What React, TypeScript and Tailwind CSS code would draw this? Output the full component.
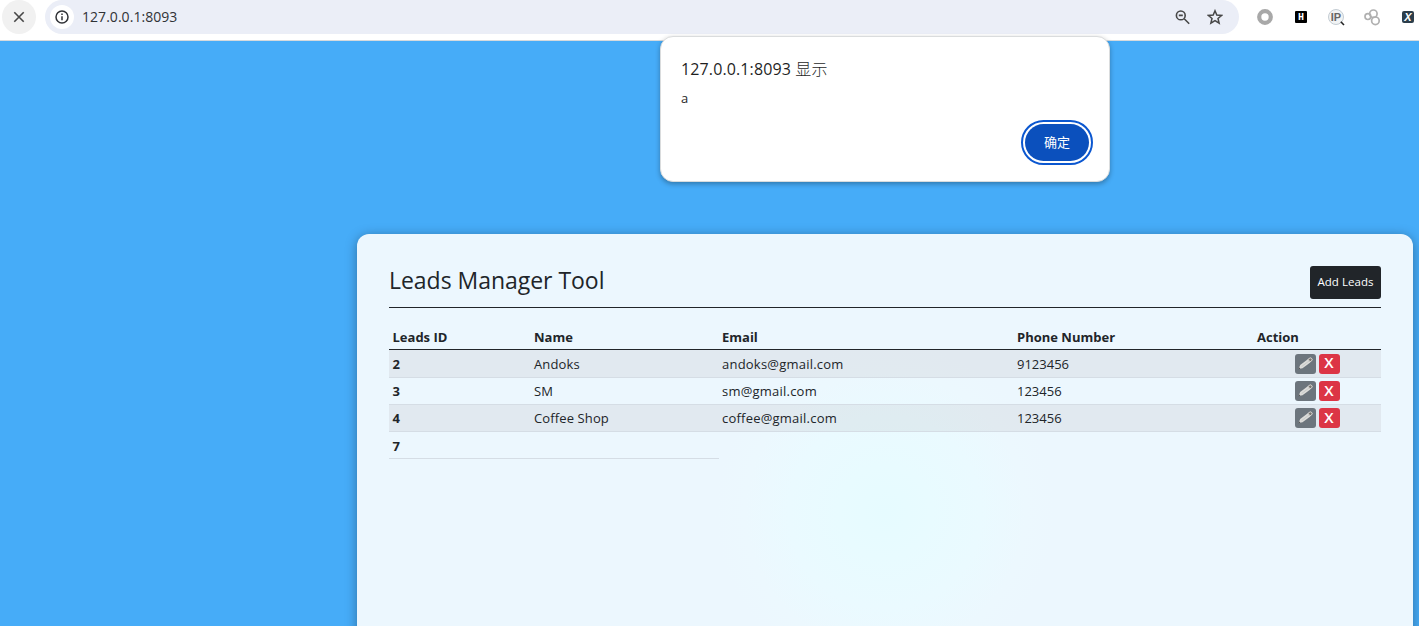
import React from "react";

type Lead = { id: number; name?: string; email?: string; phone?: string };

const leads: Lead[] = [
  { id: 2, name: "Andoks", email: "andoks@gmail.com", phone: "9123456" },
  { id: 3, name: "SM", email: "sm@gmail.com", phone: "123456" },
  { id: 4, name: "Coffee Shop", email: "coffee@gmail.com", phone: "123456" },
];

function Pencil() {
  return (
    <svg width="15" height="13" viewBox="0 0 15 13" className="-mt-px shrink-0">
      <path d="M.6 12 2.2 8 9.8 2.2l2.5 3.2-7.8 5.8z" fill="#dcdcda" />
      <path d="M.4 12.2 1.2 10.4 2.4 11.6z" fill="#3f3f3f" />
      <path d="M3.6 9.6 11 4" stroke="#bfc1c1" strokeWidth=".7" />
      <path d="m10 2.4 1.8-1.3c.6-.4 1.3-.3 1.7.2l.5.7c.4.6.3 1.2-.2 1.6l-1.7 1.3z" fill="#77756f" stroke="#ebe9e5" strokeWidth=".9" />
    </svg>
  );
}

function Toolbar() {
  return (
    <header className="flex h-[41px] shrink-0 items-start border-b border-[#d6dadd] bg-white pl-0.5">
      <div className="flex size-[34px] shrink-0 items-center justify-center rounded-full bg-[#f1f1f1]">
        <svg width="12" height="12" viewBox="0 0 12 12" className="stroke-[#474747]" strokeWidth="1.6">
          <path d="m1.3 1.3 9.4 9.4M10.7 1.3l-9.4 9.4" />
        </svg>
      </div>
      <div className="ml-[9px] flex h-[34px] w-[1194px] shrink-0 items-center rounded-full bg-[#ebeef7] pl-[5px]">
        <div className="flex size-6 items-center justify-center rounded-full bg-white">
          <svg width="14" height="14" viewBox="0 0 14 14" fill="none" stroke="#303236" strokeWidth="1.5">
            <circle cx="7" cy="7" r="6" />
            <path d="M7 6.2v4.1M7 3.5v1.4" />
          </svg>
        </div>
        <span className="ml-2 text-[14px] leading-5 tracking-[0.04px] text-[#303236]">127.0.0.1:8093</span>
        <svg width="15" height="15" viewBox="0 0 15 15" fill="none" stroke="#474747" strokeWidth="1.6" className="ml-auto">
          <circle cx="5.8" cy="5.4" r="4.4" />
          <path d="m9.2 8.8 5 5M3.8 5.4h4" />
        </svg>
        <svg width="16" height="16" viewBox="0 0 16 16" fill="none" stroke="#474747" strokeWidth="1.5" className="mr-4 ml-[17px]">
          <path d="m8 1.8 1.8 4.3 4.7.4L11 9.5l1.1 4.6L8 11.6l-4.1 2.5L5 9.5 1.5 6.5l4.7-.4z" />
        </svg>
      </div>
      <div className="ml-[18px] flex h-[34px] shrink-0 items-center">
        <svg width="16" height="16" viewBox="0 0 16 16" fill="none">
          <circle cx="8" cy="8" r="5.8" stroke="#a8a8a8" strokeWidth="4.2" />
        </svg>
        <span className="ml-[22px] flex size-3 items-center justify-center rounded-[1px] bg-black pt-0.5 font-['Liberation_Mono',monospace] text-[10px] leading-none font-bold text-white">
          H
        </span>
        <span className="relative ml-[21px] flex size-4 items-center justify-center rounded-full border border-[#c3ccd3] bg-[#f1f3f4] pt-px font-['Liberation_Sans',sans-serif] text-[11px] leading-none font-bold text-[#666]">
          IP
          <svg width="5" height="5" viewBox="0 0 5 5" className="absolute -right-[2px] -bottom-[2px]">
            <path d="m.8.8 3.2 3.2" stroke="#222" strokeWidth="1.6" />
          </svg>
        </span>
        <svg width="17" height="17" viewBox="0 0 17 17" fill="none" stroke="#b0b0b0" strokeWidth="1.7" className="ml-[20px]">
          <circle cx="3.9" cy="7.6" r="2.9" />
          <circle cx="9.4" cy="4.7" r="3.7" />
          <circle cx="11.4" cy="11.8" r="3.8" />
        </svg>
        <span className="ml-[21px] flex size-3 items-center justify-center rounded-[2px] bg-[#2c3e4b] pt-px font-['Liberation_Sans',sans-serif] text-[11px] leading-none font-bold text-white italic">
          X
        </span>
      </div>
    </header>
  );
}

function AlertDialog() {
  return (
    <div
      role="alertdialog"
      className="absolute top-[36px] left-[660px] flex h-[146px] w-[450px] flex-col rounded-[13px] border border-[#dadcdd] bg-white pt-5 pr-5 pl-5 shadow-[0_2px_5px_rgba(0,0,0,0.3)]"
    >
      <h2 className="text-[16px] leading-6 tracking-[0.12px] text-[#1f1f1f]">
        127.0.0.1:8093 <span className="font-light">显示</span>
      </h2>
      <p className="mt-[7px] text-[13px] leading-5 text-[#1f1f1f]">a</p>
      <button className="mt-4 flex h-[37px] w-16 shrink-0 items-center justify-center self-end rounded-full bg-[#0b50bd] text-[13px] text-white ring-2 ring-white outline-2 outline-offset-2 outline-[#0b57d0]">
        确定
      </button>
    </div>
  );
}

export default function App() {
  return (
    <div className="relative flex h-[626px] w-[1419px] flex-col overflow-hidden bg-[#46acf8] font-['Open_Sans','Noto_Sans_CJK_SC',sans-serif] text-[#212529]">
      <Toolbar />
      <main className="mt-[193px] ml-[357px] h-[560px] w-[1056px] shrink-0 rounded-xl bg-[#ecf7fe] bg-[radial-gradient(circle_at_528px_278px,#e6fbff_0px,#e8fbff_46px,#eafaff_96px,#ecf8fe_140px,#ecf7fe_170px)] px-8 pt-8 shadow-[0_2px_12px_rgba(0,0,0,0.35)]">
        <div className="flex h-[42px] items-start justify-between border-b border-[#212529]">
          <h1 className="text-[23px] leading-7 tracking-[-0.03px]">Leads Manager Tool</h1>
          <button className="h-[33px] w-[71px] rounded-[3px] bg-[#212529] pb-0.5 text-[11.5px] font-medium tracking-[0.05px] whitespace-nowrap text-white">
            Add Leads
          </button>
        </div>
        <table className="mt-[15px] w-[992px] table-fixed border-separate border-spacing-0 text-left text-[13px] leading-5">
          <colgroup>
            <col className="w-[141px]" />
            <col className="w-[189px]" />
            <col className="w-[294px]" />
            <col className="w-[240px]" />
            <col className="w-[128px]" />
          </colgroup>
          <thead>
            <tr className="h-[27px] font-bold *:border-b *:border-[#212529]">
              <th className="pt-px pr-0 pb-0 pl-[3.5px]">Leads ID</th>
              <th className="pt-px pr-0 pb-0 pl-[4px]">Name</th>
              <th className="pt-px pr-0 pb-0 pl-[3px]">Email</th>
              <th className="pt-px pr-0 pb-0 pl-[4px]">Phone Number</th>
              <th className="pt-px pr-0 pb-0 pl-[4px]">Action</th>
            </tr>
          </thead>
          <tbody>
            {leads.map((l) => (
              <tr
                key={l.id}
                className="h-[27px] *:border-b *:border-[#d5dde5] first:h-7 odd:bg-[rgba(50,20,20,0.06)]"
              >
                <th className="py-0 pr-0 pl-[3.5px] font-bold">{l.id}</th>
                <td className="py-0 pr-0 pl-[4px] tracking-[0.12px]">{l.name}</td>
                <td className="py-0 pr-0 pl-[3px] tracking-[0.22px]">{l.email}</td>
                <td className="py-0 pr-0 pl-[4px]">{l.phone}</td>
                <td className="p-0">
                  <div className="flex items-center justify-center gap-[3px]">
                    <button className="flex h-5 w-[21px] items-center justify-center rounded-[3px] bg-[#6c757d]">
                      <Pencil />
                    </button>
                    <button className="flex h-5 w-[21px] items-center justify-center rounded-[3px] bg-[#dc3545] pb-0.5 text-[15px] leading-none font-semibold text-white">
                      X
                    </button>
                  </div>
                </td>
              </tr>
            ))}
            <tr className="h-[27px]">
              <th className="border-b border-[#d5dde5] pt-px pr-0 pb-0 pl-[3.5px] font-bold">7</th>
              <td className="border-b border-[#d5dde5]" />
            </tr>
          </tbody>
        </table>
      </main>
      <AlertDialog />
    </div>
  );
}
